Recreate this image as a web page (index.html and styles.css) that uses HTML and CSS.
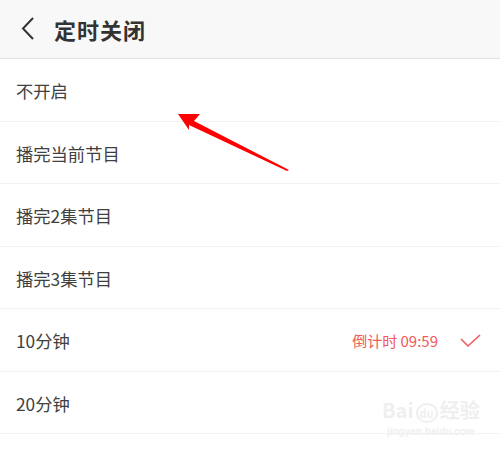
FILE: index.html
```html
<!DOCTYPE html>
<html>
<head>
<meta charset="utf-8">
<link rel="stylesheet" href="styles.css">
</head>
<body>
<div class="page">
  <header class="bar">
    <svg class="back" width="20" height="26" viewBox="0 0 20 26"><path d="M13 2 L3 12.5 L13 23" fill="none" stroke="#333" stroke-width="2"/></svg>
    <span class="title">定时关闭</span>
  </header>
  <ul class="list">
    <li class="row"><span>不开启</span></li>
    <li class="row"><span>播完当前节目</span></li>
    <li class="row"><span>播完2集节目</span></li>
    <li class="row"><span>播完3集节目</span></li>
    <li class="row"><span>10分钟</span><span class="right"><span class="count">倒计时 09:59</span>
      <svg class="check" width="22" height="16" viewBox="0 0 22 16"><path d="M1 6 L8 13 L20 2" fill="none" stroke="#f2585c" stroke-width="1.6"/></svg></span></li>
    <li class="row"><span>20分钟</span></li>
  </ul>
  <svg class="arrow" width="500" height="451" viewBox="0 0 500 451">
    <polygon points="178,114 200,114 194,121 289,170 287,171 189,125 189,130" fill="#ff0000"/>
  </svg>
  <div class="mark">
    <div class="mark-top">Bai<span class="paw">du</span>经验</div>
    <div class="mark-url">jingyan.baidu.com</div>
  </div>
</div>
</body>
</html>
```
FILE: styles.css
```css
* { box-sizing: border-box; }
html, body { margin: 0; padding: 0; }
body { width: 500px; height: 451px; overflow: hidden; background: #fff; font-family: "Noto Sans CJK SC", "Roboto", sans-serif; }
.page { position: relative; width: 500px; height: 451px; }
.bar { height: 59px; background: #f8f8f8; border-bottom: 1px solid #e2e2e2; display: flex; align-items: center; padding-left: 20px; }
.back { display: block; margin-right: 14px; }
.title { font-size: 22px; font-weight: bold; color: #333; letter-spacing: 1px; }
.list { list-style: none; margin: 0; padding: 0; }
.row { height: 62.5px; border-bottom: 1px solid #f1f1f1; display: flex; align-items: center; justify-content: space-between; padding: 2px 18px 0 16px; font-size: 17.3px; color: #404040; }
.right { display: flex; align-items: center; }
.count { color: #f2585c; font-size: 15px; margin-right: 22px; }
.check { display: block; }
.arrow { position: absolute; left: 0; top: 0; }
.mark { position: absolute; left: 382px; top: 398px; color: #efefef; text-align: center; white-space: nowrap; }
.mark-top { font-size: 20px; font-weight: bold; line-height: 24px; white-space: nowrap; }
.paw { font-size: 11px; border: 2px solid #efefef; border-radius: 50%; padding: 0 2px; margin: 0 2px; }
.mark-url { font-size: 10px; font-family: "Liberation Sans", sans-serif; font-weight: bold; line-height: 13px; }
```
